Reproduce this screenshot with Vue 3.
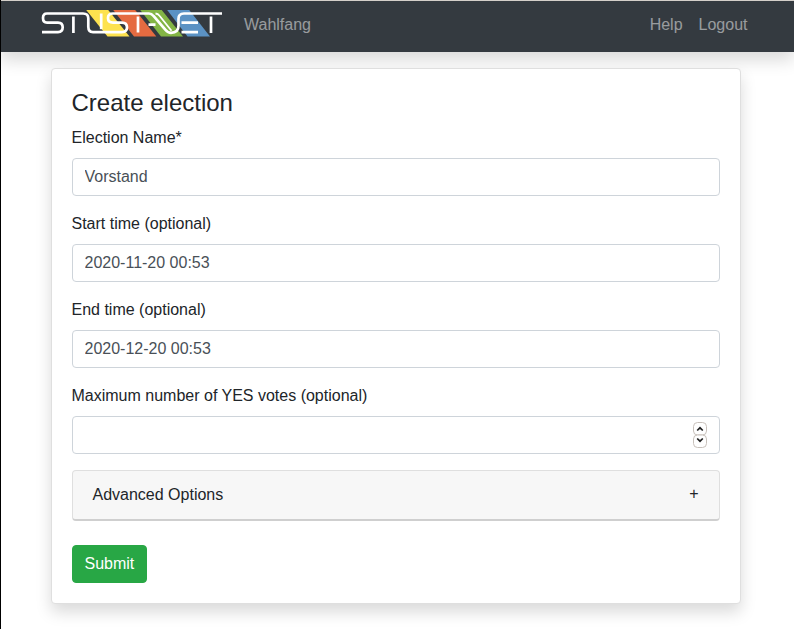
<script setup>
import { ref } from 'vue'

const fields = ref([
  { id: 'name', label: 'Election Name*', value: 'Vorstand' },
  { id: 'start', label: 'Start time (optional)', value: '2020-11-20 00:53' },
  { id: 'end', label: 'End time (optional)', value: '2020-12-20 00:53' },
])
</script>

<template>
  <div class="page">
    <nav class="navbar">
      <a class="brand">
        <svg width="182" height="30" viewBox="41 10.200 182 30">
          <path fill="#fde24f" d="M85.500 9.300H107.500L129.500 36.700H107.500Z" />
          <path fill="#e56b41" d="M112.500 9.300H134.500L156.300 36.700H134Z" />
          <path fill="#83b545" d="M139.500 9.300H161L183 36.700H161Z" />
          <path fill="#5b92c4" d="M166.500 9.300H188.500L210 36.700H187.500Z" />
          <g fill="none" stroke="#fff" stroke-width="2.7">
            <path d="M42 32.300H58Q62.700 32.300 62.700 27.500Q62.700 22.800 58 22.800H47Q43 22.800 43 18.200Q43 13.700 47 13.700H83Q88.300 13.700 88.300 18.500V27Q88.300 32.300 93 32.300H122Q127 32.300 127 27.500Q127 22.800 122 22.800H113Q108 22.800 108 18.200Q108 13.700 113 13.700H149Q151.500 13.700 153.500 16.200L165.500 30Q168 33 171 33Q178.500 33 178.500 26V19Q178.500 13.700 184 13.700H222" />
            <path stroke-width="1.800" d="M155.500 13.700Q158 14 159.500 16L171.500 31" />
            <path d="M73.400 16.700V33.200M101.200 13.700V29.500M138 16.700V32.800M148.500 24.800H155.500M181.500 22.800H198M181.500 32.300H198M211 16.700V33.200" />
          </g>
        </svg>
      </a>
      <a class="link">Wahlfang</a>
      <div class="account"><a class="link">Help</a><a class="link">Logout</a></div>
    </nav>
    <main class="card">
      <h4>Create election</h4>
      <div v-for="f in fields" :key="f.id" class="group">
        <label :for="f.id">{{ f.label }}</label>
        <input :id="f.id" v-model="f.value" class="control" type="text" />
      </div>
      <div class="group">
        <label for="votes">Maximum number of YES votes (optional)</label>
        <div class="control number">
          <input id="votes" class="bare" type="text" />
          <svg width="14" height="28" viewBox="0 0 14 28">
            <g fill="#fff" stroke="#c8c1bb">
              <rect x=".5" y="1.500" width="13" height="12.500" rx="4" />
              <rect x=".5" y="14" width="13" height="12.500" rx="4" />
            </g>
            <path d="M4.200 9.500L7 6.800L9.800 9.500M4.200 17.500L7 20.200L9.800 17.500" fill="none" stroke="#222" stroke-width="1.700" />
          </svg>
        </div>
      </div>
      <div class="advanced"><span>Advanced Options</span><span class="plus">+</span></div>
      <button class="submit">Submit</button>
    </main>
  </div>
</template>

<style>
body {
  margin: 0;
  background: #fff;
}
</style>

<style scoped>
* {
  box-sizing: border-box;
}
.page {
  height: 629px;
  overflow: hidden;
  border-left: 1px solid #000;
  font: 16px/24px "Liberation Sans", Arial, sans-serif;
  color: #212529;
}
.navbar {
  display: flex;
  align-items: center;
  height: 52px;
  margin-left: -1px;
  padding: 0 46.5px 4px 41px;
  border-top: 1px solid #d4cfca;
  border-left: 1px solid #d4cfca;
  background: #343a40;
  box-shadow: 0 8px 16px rgba(0, 0, 0, 0.15);
}
.brand {
  display: flex;
  margin-left: -1px;
  margin-right: 21px;
}
.link {
  color: rgba(255, 255, 255, 0.5);
}
.account {
  display: flex;
  gap: 16px;
  margin-left: auto;
}
.card {
  width: 690px;
  height: 536px;
  margin: 16px 0 0 49.5px;
  padding: 20px;
  border: 1px solid #dfdfdf;
  border-radius: 4px;
  background: #fff;
  box-shadow: 0 8px 16px rgba(0, 0, 0, 0.15);
}
h4 {
  margin: 0 0 8px;
  font-size: 24px;
  font-weight: 500;
  line-height: 28.8px;
}
.group {
  margin-bottom: 16px;
}
label {
  display: block;
  margin-bottom: 8px;
}
.control {
  display: block;
  width: 100%;
  height: 38px;
  padding: 6px 12px;
  border: 1px solid #ced4da;
  border-radius: 4px;
  background: #fff;
  color: #495057;
  font: inherit;
}
.number {
  display: flex;
  align-items: center;
}
.bare {
  flex: 1;
  border: 0;
  outline: 0;
}
.advanced {
  display: flex;
  justify-content: space-between;
  height: 51px;
  padding: 12px 20px;
  border: 1px solid #dfdfdf;
  border-bottom: 2px solid #cfcfcf;
  border-radius: 4px;
  background: #f7f7f7;
}
.plus {
  line-height: 22px;
}
.submit {
  display: block;
  height: 38px;
  margin-top: 24px;
  padding: 6px 12px;
  border: 1px solid #28a745;
  border-radius: 4px;
  background: #28a745;
  color: #fff;
  font: inherit;
}
</style>
